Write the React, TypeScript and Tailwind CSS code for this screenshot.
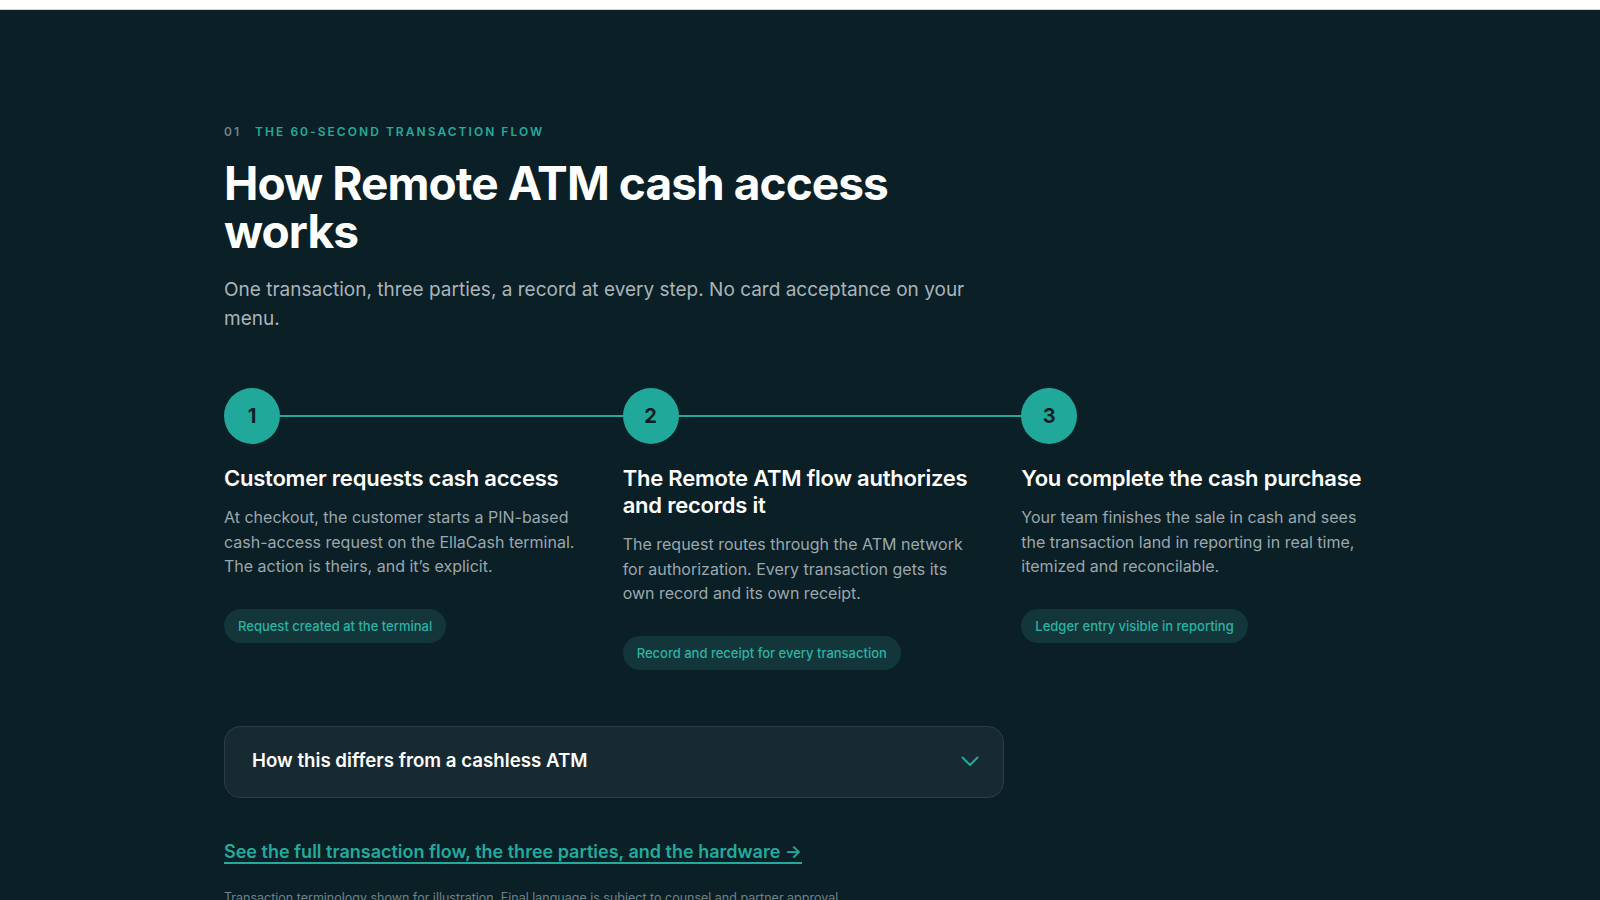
import React from "react";

type Step = {
  n: number;
  title: string;
  body: string;
  tag: string;
};

const steps: Step[] = [
  {
    n: 1,
    title: "Customer requests cash access",
    body: "At checkout, the customer starts a PIN-based cash-access request on the EllaCash terminal. The action is theirs, and it\u2019s explicit.",
    tag: "Request created at the terminal",
  },
  {
    n: 2,
    title: "The Remote ATM flow authorizes and records it",
    body: "The request routes through the ATM network for authorization. Every transaction gets its own record and its own receipt.",
    tag: "Record and receipt for every transaction",
  },
  {
    n: 3,
    title: "You complete the cash purchase",
    body: "Your team finishes the sale in cash and sees the transaction land in reporting in real time, itemized and reconcilable.",
    tag: "Ledger entry visible in reporting",
  },
];

const sans = "font-['Inter','Liberation_Sans',sans-serif]";

const Chevron = () => (
  <svg width="18" height="11" viewBox="0 0 18 11" fill="none">
    <polyline
      points="1.5,1.5 9,9 16.5,1.5"
      stroke="#22ab9c"
      strokeWidth="2"
      strokeLinecap="round"
      strokeLinejoin="round"
    />
  </svg>
);

const App: React.FC = () => {
  return (
    <div className={`min-h-screen bg-[#0b1f26] ${sans}`}>
      {/* top strip */}
      <div className="h-[10px] bg-white border-b border-[#c9d6da]" />

      <section className="max-w-6xl mx-auto pt-[112px] pb-24">
        {/* Eyebrow */}
        <div className="flex items-center gap-[14px] text-[12px] leading-5 font-semibold tracking-[0.17em] uppercase">
          <span className="text-[#6f8389]">01</span>
          <span className="text-[#22ab9c]">The 60-second transaction flow</span>
        </div>

        <h1 className="mt-[17px] max-w-[780px] text-[46px] leading-[48px] font-bold tracking-[-0.02em] text-white">
          How Remote ATM cash access works
        </h1>

        <p className="mt-[20px] max-w-[780px] text-[19px] leading-[29px] text-[#a9b5ba]">
          One transaction, three parties, a record at every step. No card
          acceptance on your menu.
        </p>

        {/* Steps */}
        <div className="mt-[55px] grid grid-cols-3 gap-11">
          {steps.map((s, i) => (
            <div key={s.n} className="flex flex-col items-start">
              <div
                className={`flex items-center self-stretch ${
                  i < steps.length - 1 ? "-mr-11" : ""
                }`}
              >
                <div className="w-14 h-14 shrink-0 rounded-full bg-[#20a99b] flex items-center justify-center text-[20px] font-bold text-[#0b1f26]">
                  {s.n}
                </div>
                {i < steps.length - 1 && (
                  <div className="flex-1 h-[2px] bg-[#20a99b]" />
                )}
              </div>

              <h3 className="mt-[21px] text-[22px] leading-[27px] font-semibold tracking-[-0.01em] text-white">
                {s.title}
              </h3>
              <p className="mt-[13px] text-[16px] leading-[24.5px] text-[#9aa8ad]">
                {s.body}
              </p>
              <span className="mt-[30px] inline-flex items-center rounded-full bg-[#12363a] px-[14px] py-2 text-[13px] leading-[18px] font-medium text-[#2bb3a3]">
                {s.tag}
              </span>
            </div>
          ))}
        </div>

        {/* Accordion */}
        <button className="mt-14 w-[780px] h-[72px] flex items-center justify-between rounded-2xl border border-[#2c3e45] bg-[#172a31] pl-[27px] pr-6 text-left">
          <span className="text-[18.7px] font-semibold text-white">
            How this differs from a cashless ATM
          </span>
          <Chevron />
        </button>

        <a
          href="#"
          className="mt-[40px] block w-fit text-[18px] leading-7 font-semibold text-[#22ab9c] underline underline-offset-4 decoration-[1.5px]"
        >
          See the full transaction flow, the three parties, and the hardware →
        </a>

        <p className="mt-[22px] text-[12.5px] leading-5 text-[#6f8389]">
          Transaction terminology shown for illustration. Final language is
          subject to counsel and partner approval.
        </p>
      </section>
    </div>
  );
};

export default App;
